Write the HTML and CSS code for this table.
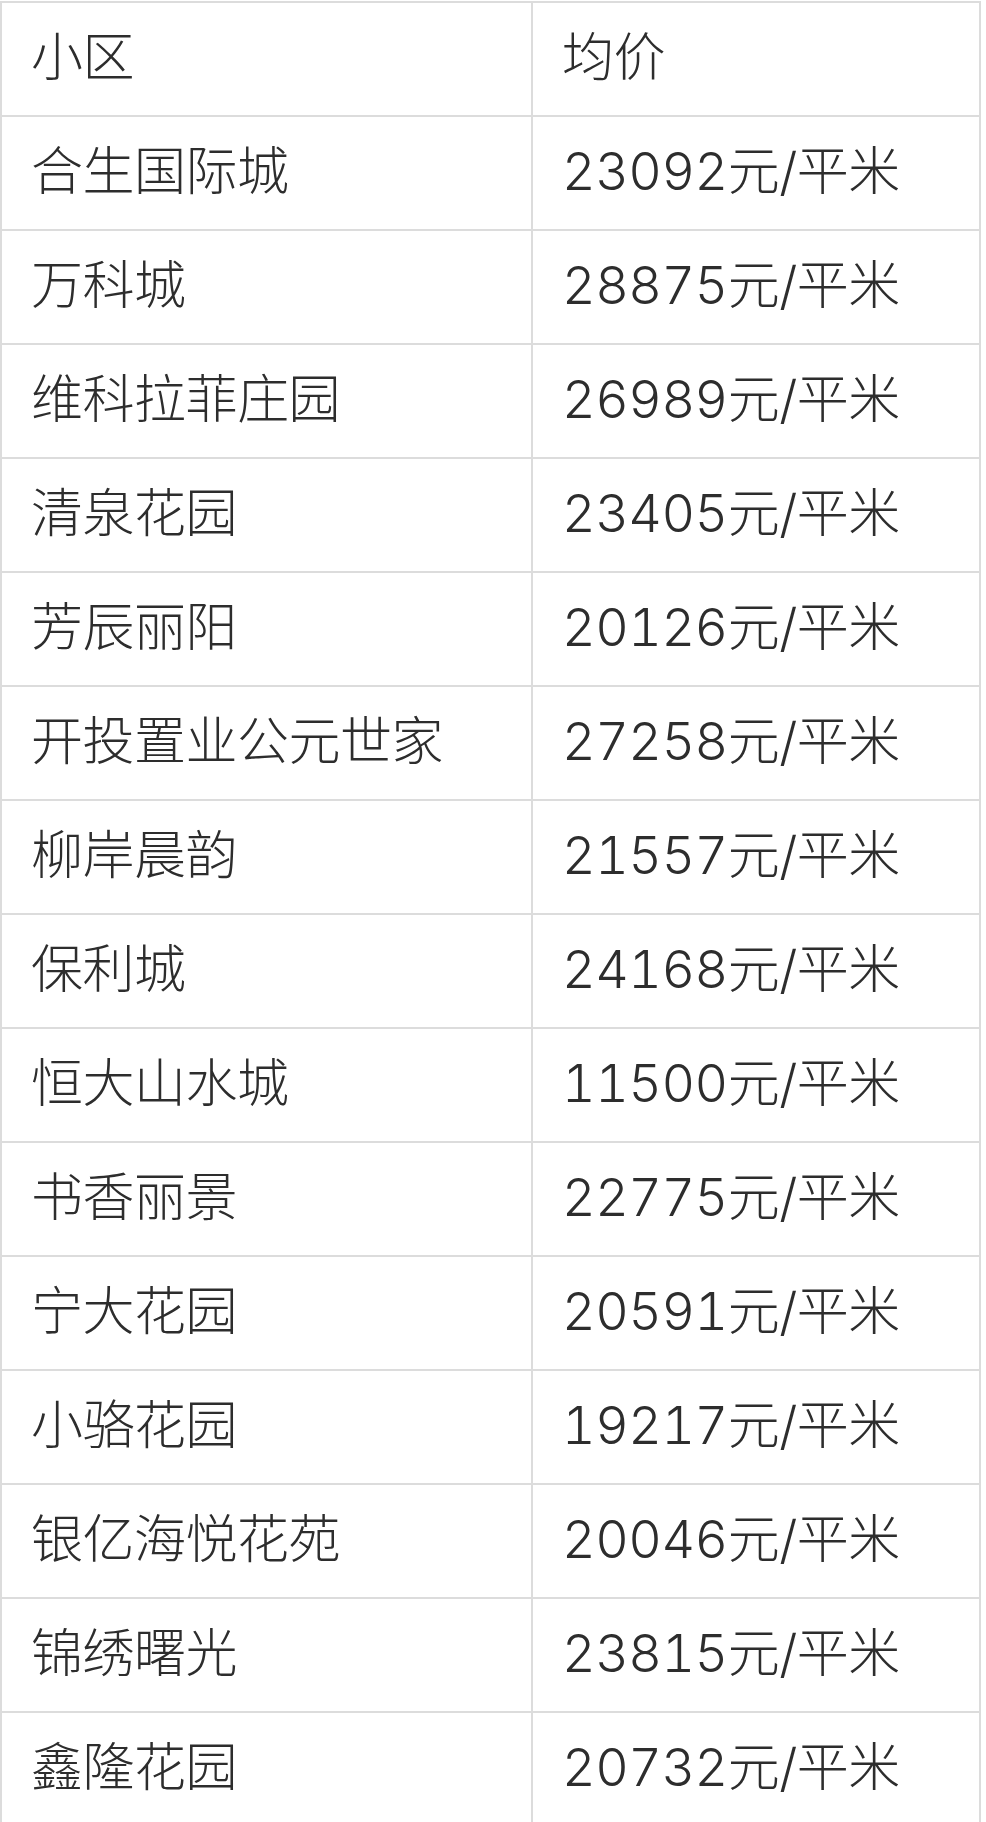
FILE: index.html
```html
<!DOCTYPE html>
<html lang="zh-CN">
<head>
<meta charset="utf-8">
<title>小区均价</title>
<link rel="stylesheet" href="styles.css">
</head>
<body>
<div class="table">
  <div class="cell">小区</div><div class="cell">均价</div>
  <div class="cell">合生国际城</div><div class="cell">23092元/平米</div>
  <div class="cell">万科城</div><div class="cell">28875元/平米</div>
  <div class="cell">维科拉菲庄园</div><div class="cell">26989元/平米</div>
  <div class="cell">清泉花园</div><div class="cell">23405元/平米</div>
  <div class="cell">芳辰丽阳</div><div class="cell">20126元/平米</div>
  <div class="cell">开投置业公元世家</div><div class="cell">27258元/平米</div>
  <div class="cell">柳岸晨韵</div><div class="cell">21557元/平米</div>
  <div class="cell">保利城</div><div class="cell">24168元/平米</div>
  <div class="cell">恒大山水城</div><div class="cell">11500元/平米</div>
  <div class="cell">书香丽景</div><div class="cell">22775元/平米</div>
  <div class="cell">宁大花园</div><div class="cell">20591元/平米</div>
  <div class="cell">小骆花园</div><div class="cell">19217元/平米</div>
  <div class="cell">银亿海悦花苑</div><div class="cell">20046元/平米</div>
  <div class="cell">锦绣曙光</div><div class="cell">23815元/平米</div>
  <div class="cell">鑫隆花园</div><div class="cell">20732元/平米</div>
</div>
</body>
</html>
```

FILE: styles.css
```css
html, body {
  margin: 0;
  padding: 0;
  background: #ffffff;
}

.table {
  display: grid;
  grid-template-columns: 529px 446px;
  grid-auto-rows: 112px;
  gap: 2px;
  width: 981px;
  box-sizing: border-box;
  padding: 2px 2px 0 2px;
  margin-top: 1px;
  background: #dcdcdc;
  font-family: Inter, "Noto Sans CJK SC", sans-serif;
  font-size: 52px;
  font-weight: 300;
  font-variant-numeric: tabular-nums;
  letter-spacing: -0.5px;
  color: #2d2d2d;
}

.cell {
  background: #ffffff;
  display: flex;
  align-items: center;
  padding-left: 29px;
  padding-bottom: 11px;
  box-sizing: border-box;
  white-space: nowrap;
}
```
